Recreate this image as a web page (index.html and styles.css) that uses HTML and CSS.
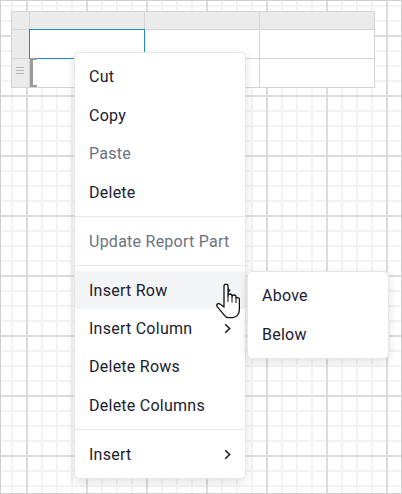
FILE: index.html
```html
<!DOCTYPE html>
<html lang="en">
<head>
    <meta charset="UTF-8">
    <meta name="viewport" content="width=device-width, initial-scale=1.0">
    <title>Report Designer - Table Context Menu</title>
    <link rel="stylesheet" href="styles.css">
</head>
<body>
    <div class="canvas">
        <!-- Report table part -->
        <div class="report-table">
            <div class="cell head corner"></div>
            <div class="cell head"></div>
            <div class="cell head"></div>
            <div class="cell head"></div>

            <div class="cell row-head"></div>
            <div class="cell selected"></div>
            <div class="cell"></div>
            <div class="cell"></div>

            <div class="cell row-head"><span class="handle"></span></div>
            <div class="cell marked"></div>
            <div class="cell"></div>
            <div class="cell"></div>
        </div>

        <!-- Context menu -->
        <div class="context-menu">
            <ul class="menu-group">
                <li class="menu-item">Cut</li>
                <li class="menu-item">Copy</li>
                <li class="menu-item disabled">Paste</li>
                <li class="menu-item">Delete</li>
            </ul>
            <ul class="menu-group">
                <li class="menu-item disabled">Update Report Part</li>
            </ul>
            <ul class="menu-group">
                <li class="menu-item has-sub active">
                    <span>Insert Row</span>
                    <svg class="chevron" viewBox="0 0 7 11"><path d="M1.2 1.2 L5.6 5.5 L1.2 9.8"/></svg>
                    <ul class="submenu">
                        <li class="menu-item">Above</li>
                        <li class="menu-item">Below</li>
                    </ul>
                </li>
                <li class="menu-item has-sub">
                    <span>Insert Column</span>
                    <svg class="chevron" viewBox="0 0 7 11"><path d="M1.2 1.2 L5.6 5.5 L1.2 9.8"/></svg>
                </li>
                <li class="menu-item">Delete Rows</li>
                <li class="menu-item">Delete Columns</li>
            </ul>
            <ul class="menu-group">
                <li class="menu-item has-sub">
                    <span>Insert</span>
                    <svg class="chevron" viewBox="0 0 7 11"><path d="M1.2 1.2 L5.6 5.5 L1.2 9.8"/></svg>
                </li>
            </ul>
        </div>

        <!-- mouse pointer -->
        <svg class="cursor" viewBox="0 0 25 36">
            <path class="hand" d="M9 3.2 a2 2 0 0 1 4 0 V13 a2 2 0 0 1 4 0 v1 a2 2 0 0 1 4 0 v1.2 a2 2 0 0 1 3.4 0.8 V26 c0 4.5 -2.4 8 -6.6 8.6 H13.6 c-2.2 0 -3.4 -1 -4.6 -2.8 L2.2 23.6 c-1.2 -1.6 0.4 -3.8 2.4 -2.8 L9 24 Z"/>
            <path class="knuckle" d="M13 13 v6 M17 14 v5.5 M21 15.2 v4.8"/>
        </svg>
    </div>
</body>
</html>
```

FILE: styles.css
```css
html, body {
    margin: 0;
    padding: 0;
    height: 100%;
    font-family: Roboto, "Noto Sans", Arial, sans-serif;
    color: #1a2130;
}
.canvas {
    position: relative;
    height: 100%;
    box-sizing: border-box;
    padding: 10px;
    border: 1px solid #cfcfcf;
    background-color: #fff;
    background-image:
        linear-gradient(to right, #dcdcdc 2px, transparent 2px),
        linear-gradient(to bottom, #dcdcdc 2px, transparent 2px),
        linear-gradient(to right, #f3f3f3 2px, transparent 2px),
        linear-gradient(to bottom, #f3f3f3 2px, transparent 2px);
    background-size: 60px 60px, 60px 60px, 15px 15px, 15px 15px;
    background-position: 25px 34px;
    overflow: hidden;
}
/* Table part */
.report-table {
    display: grid;
    grid-template-columns: 18px repeat(3, 115px);
    grid-template-rows: 18px 29px 29px;
    width: max-content;
    border-left: 1px solid #d4d4d4;
    border-top: 1px solid #d4d4d4;
    background-color: #fff;
}
.cell {
    position: relative;
    box-sizing: border-box;
    border-right: 1px solid #d4d4d4;
    border-bottom: 1px solid #d4d4d4;
}
.cell.head, .cell.row-head {
    background-color: #ebebeb;
}
.cell.selected::after {
    content: "";
    position: absolute;
    top: -1px;
    left: -1px;
    right: -1px;
    bottom: -1px;
    border: 1px solid #1e8acb;
}
.cell.marked::before {
    content: "";
    position: absolute;
    top: -1px;
    left: 0;
    width: 7px;
    height: 29px;
    border: 2px solid #9a9a9a;
    border-left-width: 3px;
    border-right: none;
    box-sizing: border-box;
}
.handle {
    position: absolute;
    left: 4px;
    top: 8px;
    width: 8px;
    height: 7px;
    background-image: linear-gradient(to bottom, #b5b5b5 1px, transparent 1px);
    background-size: 8px 3px;
}
/* Context menu */
.context-menu {
    position: absolute;
    left: 73px;
    top: 51px;
    width: 172px;
    box-sizing: border-box;
    background: #fff;
    border: 1px solid #e6e7ea;
    border-radius: 5px;
    box-shadow: 0 3px 10px rgba(0, 0, 0, 0.12);
    font-size: 16px;
    letter-spacing: 0.25px;
}
.menu-group {
    list-style: none;
    margin: 0;
    padding: 4.8px 0;
}
.menu-group + .menu-group {
    border-top: 1px solid #e5e7eb;
}
.menu-item {
    position: relative;
    display: flex;
    align-items: center;
    justify-content: space-between;
    height: 38.4px;
    padding: 0 14px 0 14px;
    white-space: nowrap;
    cursor: default;
}
.menu-item.disabled {
    color: #6b7280;
}
.menu-item.active {
    background-color: #f3f4f6;
}
.chevron {
    width: 7px;
    height: 11px;
    fill: none;
    stroke: #1a2130;
    stroke-width: 1.6;
}
.submenu {
    position: absolute;
    left: calc(100% + 2px);
    top: 0;
    width: 142px;
    box-sizing: border-box;
    list-style: none;
    margin: 0;
    padding: 4.8px 0;
    background: #fff;
    border: 1px solid #e6e7ea;
    border-radius: 5px;
    box-shadow: 0 3px 10px rgba(0, 0, 0, 0.12);
    color: #1a2130;
}
.submenu .menu-item {
    background: none;
}
/* pointer over the Insert Row arrow */
.cursor {
    position: absolute;
    left: 214px;
    top: 282px;
    width: 25px;
    height: 36px;
}
.cursor .hand {
    fill: #fff;
    stroke: #111;
    stroke-width: 1.3;
    stroke-linejoin: round;
}
.cursor .knuckle {
    fill: none;
    stroke: #111;
    stroke-width: 1;
}
```
